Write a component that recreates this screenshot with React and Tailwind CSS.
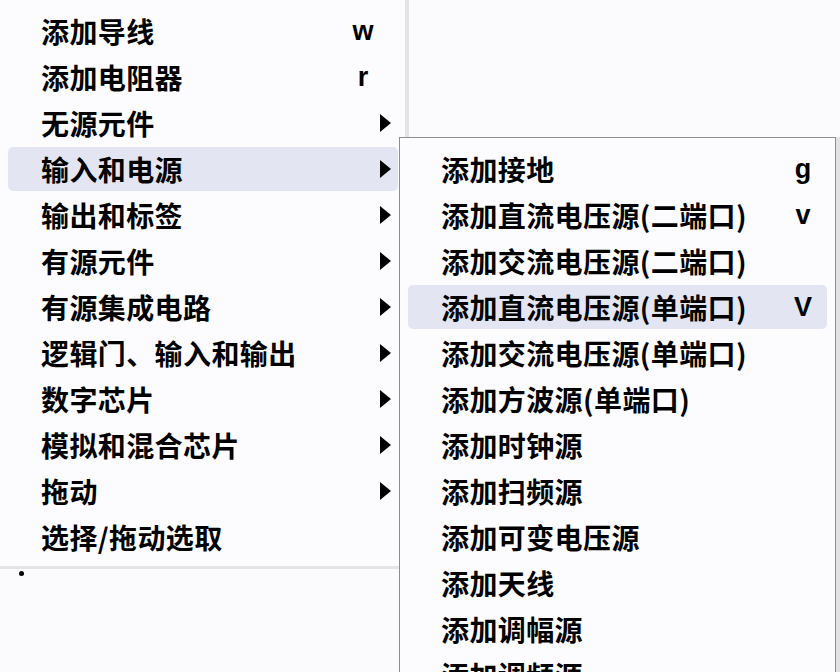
import React from 'react';

const FONT = { fontFamily: '"Noto Sans CJK SC", "Noto Sans", sans-serif' };

const mainItems = [
  { label: '添加导线', key: 'w' },
  { label: '添加电阻器', key: 'r' },
  { label: '无源元件', sub: true },
  { label: '输入和电源', sub: true, active: true },
  { label: '输出和标签', sub: true },
  { label: '有源元件', sub: true },
  { label: '有源集成电路', sub: true },
  { label: '逻辑门、输入和输出', sub: true },
  { label: '数字芯片', sub: true },
  { label: '模拟和混合芯片', sub: true },
  { label: '拖动', sub: true },
  { label: '选择/拖动选取' },
];

const sourceItems = [
  { label: '添加接地', key: 'g' },
  { label: '添加直流电压源(二端口)', key: 'v' },
  { label: '添加交流电压源(二端口)' },
  { label: '添加直流电压源(单端口)', key: 'V', active: true },
  { label: '添加交流电压源(单端口)' },
  { label: '添加方波源(单端口)' },
  { label: '添加时钟源' },
  { label: '添加扫频源' },
  { label: '添加可变电压源' },
  { label: '添加天线' },
  { label: '添加调幅源' },
  { label: '添加调频源' },
];

const Arrow = () => (
  <svg width="11" height="18" viewBox="0 0 11 18">
    <path d="M0 0 L11 9 L0 18 Z" fill="#000" />
  </svg>
);

const MenuRow = ({ item, arrowCol }) => (
  <div className="h-[46px] py-px">
    <div
      className={`h-full flex items-center pl-[33px] rounded-[5px] ${
        item.active ? 'bg-[#e3e6f2]' : ''
      } ${arrowCol ? 'pr-[7px]' : 'pr-[9px]'}`}
    >
      <span
        className="flex-1 text-[28px] font-bold tracking-[0.4px] text-black leading-none whitespace-nowrap"
        style={FONT}
      >
        {item.label}
      </span>
      <span
        className="w-[30px] text-center text-[27px] font-bold text-black leading-none"
        style={{ fontFamily: '"Liberation Sans", Arial, sans-serif' }}
      >
        {item.key || ''}
      </span>
      {arrowCol && (
        <span className="w-[13px] flex justify-end">{item.sub && <Arrow />}</span>
      )}
    </div>
  </div>
);

export default function App() {
  return (
    <div className="relative w-[840px] h-[672px] overflow-hidden bg-[#fbfbfd]">
      <div className="w-[409px] bg-[#fcfcfe] border-r-4 border-b-[3px] border-[#e4e4e7]">
        <div className="pt-[8px] pb-[6px] pl-2 pr-[7px]">
          {mainItems.map((item) => (
            <MenuRow key={item.label} item={item} arrowCol />
          ))}
        </div>
      </div>
      <div className="ml-[19px] mt-[2px] w-[5px] h-[5px] bg-black rounded-full" />

      <div className="absolute left-[399px] top-[137px] w-[437px] bg-[#fcfcfe] border border-[#8d8d90] shadow-[4px_0_0_#e2e2e5]">
        <div className="pt-[8px] px-2">
          {sourceItems.map((item) => (
            <MenuRow key={item.label} item={item} />
          ))}
        </div>
      </div>
    </div>
  );
}
